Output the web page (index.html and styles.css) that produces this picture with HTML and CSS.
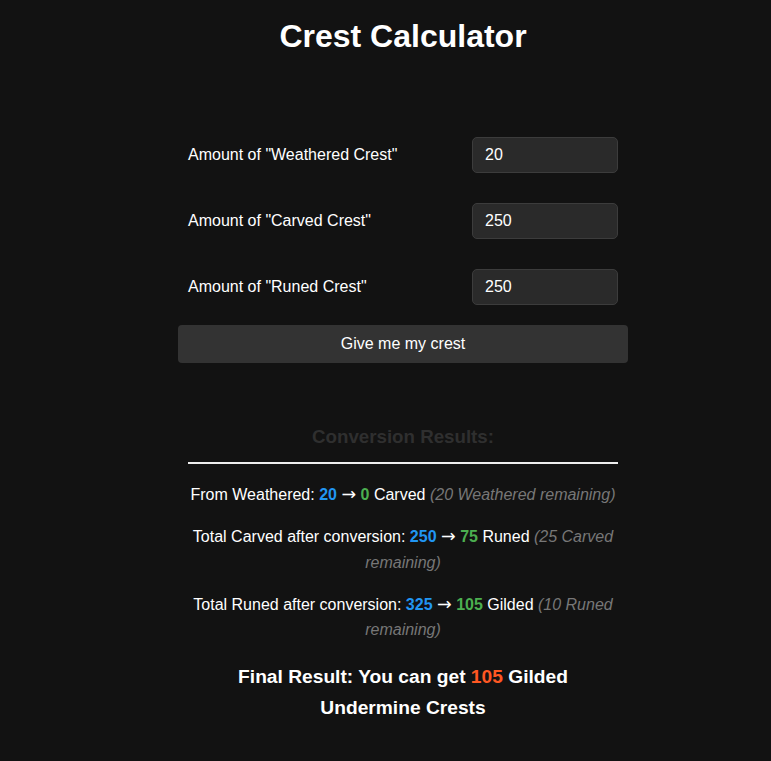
FILE: index.html
```html
<!DOCTYPE html>
<html lang="en">
<head>
<meta charset="utf-8">
<title>Crest Calculator</title>
<link rel="stylesheet" href="styles.css">
</head>
<body>
<h1 class="title">Crest Calculator</h1>
<div class="calc">
  <div class="row">
    <label class="label" for="w">Amount of "Weathered Crest"</label>
    <input class="field" id="w" type="text" value="20">
  </div>
  <div class="row">
    <label class="label" for="c">Amount of "Carved Crest"</label>
    <input class="field" id="c" type="text" value="250">
  </div>
  <div class="row">
    <label class="label" for="r">Amount of "Runed Crest"</label>
    <input class="field" id="r" type="text" value="250">
  </div>
  <button class="btn" type="button">Give me my crest</button>

  <div class="results">
    <h3 class="results-title">Conversion Results:</h3>
    <p class="line">From Weathered: <b class="in">20</b> <span class="arrow">→</span> <b class="out">0</b> Carved <i class="rem">(20 Weathered remaining)</i></p>
    <p class="line">Total Carved after conversion: <b class="in">250</b> <span class="arrow">→</span> <b class="out">75</b> Runed <i class="rem">(25 Carved remaining)</i></p>
    <p class="line">Total Runed after conversion: <b class="in">325</b> <span class="arrow">→</span> <b class="out">105</b> Gilded <i class="rem">(10 Runed remaining)</i></p>
    <p class="final">Final Result: You can get <span class="gold">105</span> Gilded Undermine Crests</p>
  </div>
</div>
</body>
</html>
```

FILE: styles.css
```css
html, body {
  background: #121212;
}
body {
  margin: 0;
  padding: 18px 0 20px 35px;
  font-family: "Liberation Sans", Arial, sans-serif;
  color: #ffffff;
}
.title {
  margin: 0;
  text-align: center;
  font-size: 32px;
  line-height: 37px;
  font-weight: bold;
}
.calc {
  width: 450px;
  margin: 82px auto 0;
}
.row {
  display: flex;
  align-items: center;
  justify-content: space-between;
  padding: 0 10px;
  margin-bottom: 30px;
}
.row:nth-child(3) {
  margin-bottom: 20px;
}
.label {
  font-size: 16px;
}
.field {
  width: 146px;
  height: 36px;
  box-sizing: border-box;
  background: #2a2a2a;
  border: 1px solid #3c3c3c;
  border-radius: 5px;
  color: #ffffff;
  font-family: "Liberation Sans", Arial, sans-serif;
  font-size: 16px;
  padding: 0 12px;
  outline: none;
}
.btn {
  display: block;
  width: 100%;
  height: 38px;
  background: #333333;
  color: #ffffff;
  border: none;
  border-radius: 4px;
  font-family: "Liberation Sans", Arial, sans-serif;
  font-size: 16px;
  cursor: pointer;
}
.results {
  margin: 63px 10px 0;
  text-align: center;
}
.results-title {
  margin: 0;
  padding-bottom: 14px;
  border-bottom: 2px solid #eeeeee;
  color: #2f2f2f;
  font-size: 18.72px;
  line-height: 22px;
}
.line {
  margin: 16.4px 0 0;
  font-size: 16px;
  line-height: 25.6px;
}
.line:first-of-type {
  margin-top: 18px;
}
.arrow {
  font-family: "DejaVu Sans", sans-serif;
  font-size: 17.5px;
  line-height: 1;
}
.in {
  color: #2196f3;
}
.out {
  color: #4caf50;
}
.rem {
  color: #777777;
}
.final {
  margin: 19.5px 0 0;
  font-size: 19.2px;
  font-weight: bold;
  line-height: 30.7px;
}
.gold {
  color: #ff5722;
}
```
